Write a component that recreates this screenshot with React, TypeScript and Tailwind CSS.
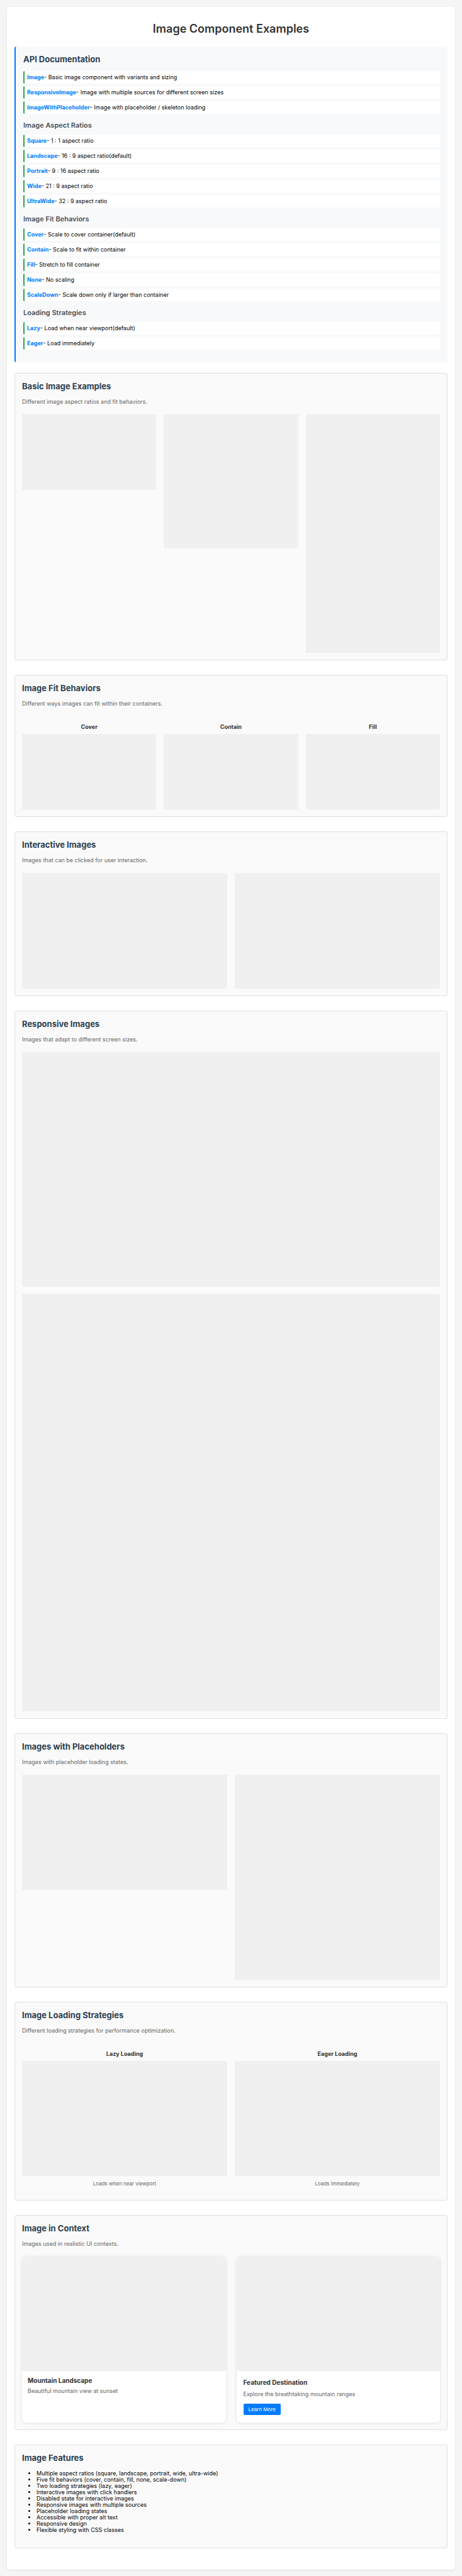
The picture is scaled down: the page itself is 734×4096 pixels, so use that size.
import type { ReactNode } from "react";

type Entry = { name: string; text: string };

const components: Entry[] = [
  { name: "Image", text: "Basic image component with variants and sizing" },
  { name: "ResponsiveImage", text: "Image with multiple sources for different screen sizes" },
  { name: "ImageWithPlaceholder", text: "Image with placeholder / skeleton loading" },
];

const ratios: Entry[] = [
  { name: "Square", text: "1 : 1 aspect ratio" },
  { name: "Landscape", text: "16 : 9 aspect ratio(default)" },
  { name: "Portrait", text: "9 : 16 aspect ratio" },
  { name: "Wide", text: "21 : 9 aspect ratio" },
  { name: "UltraWide", text: "32 : 9 aspect ratio" },
];

const fits: Entry[] = [
  { name: "Cover", text: "Scale to cover container(default)" },
  { name: "Contain", text: "Scale to fit within container" },
  { name: "Fill", text: "Stretch to fill container" },
  { name: "None", text: "No scaling" },
  { name: "ScaleDown", text: "Scale down only if larger than container" },
];

const strategies: Entry[] = [
  { name: "Lazy", text: "Load when near viewport(default)" },
  { name: "Eager", text: "Load immediately" },
];

const features = [
  "Multiple aspect ratios (square, landscape, portrait, wide, ultra-wide)",
  "Five fit behaviors (cover, contain, fill, none, scale-down)",
  "Two loading strategies (lazy, eager)",
  "Interactive images with click handlers",
  "Disabled state for interactive images",
  "Responsive images with multiple sources",
  "Placeholder loading states",
  "Accessible with proper alt text",
  "Responsive design",
  "Flexible styling with CSS classes",
];

const aspects = {
  landscape: "aspect-video",
  square: "aspect-square",
  portrait: "aspect-[9/16]",
};

function Picture({ aspect = "landscape" }: { aspect?: keyof typeof aspects }) {
  return <div className={`w-full bg-[#f0f0f0] ${aspects[aspect]}`} />;
}

function EntryList({ entries }: { entries: Entry[] }) {
  return (
    <ul className="flex flex-col gap-1">
      {entries.map((e) => (
        <li
          key={e.name}
          className="rounded-[2px] border-l-2 border-[#28a745] bg-white p-1 text-[9px] leading-3 text-black"
        >
          <strong className="font-bold text-[#007bff]">{e.name}</strong>- {e.text}
        </li>
      ))}
    </ul>
  );
}

function SubHeading({ children }: { children: ReactNode }) {
  return (
    <h3 className="mt-[11px] mb-2 text-[11px] leading-[14px] font-semibold text-[#495057]">{children}</h3>
  );
}

function Section({ title, intro, children }: { title: string; intro?: string; children: ReactNode }) {
  return (
    <section className="mb-[23px] rounded-[3px] border border-[#e0e0e0] bg-[#fafafa] p-[11px]">
      <h2 className="mb-[10px] text-[13px] leading-[18px] font-bold text-[#2c3e50]">{title}</h2>
      {intro && <p className="mb-[14px] text-[9px] leading-3 text-[#666]">{intro}</p>}
      {children}
    </section>
  );
}

function Labelled({ label, caption }: { label: string; caption?: string }) {
  return (
    <div className="pt-[11px] text-center">
      <h4 className="mb-[5px] text-[9px] leading-3 font-bold text-[#333]">{label}</h4>
      <Picture />
      {caption && <p className="mt-[7px] mb-[10px] text-[8px] leading-[10px] text-[#666]">{caption}</p>}
    </div>
  );
}

export default function App() {
  return (
    <div className="bg-[#f5f5f5] p-[11px] font-['Inter',sans-serif]">
      <main className="rounded-[5px] bg-white px-3 pt-3 pb-[11px] shadow-[0_1px_3px_rgba(0,0,0,0.1)]">
        <h1 className="mt-[11px] mb-4 text-center text-[18px] leading-6 font-semibold text-[#333]">
          Image Component Examples
        </h1>

        <section className="mb-[17px] rounded-[3px] border-l-2 border-[#007bff] bg-[#f8f9fa] px-3 pt-[11px] pb-5">
          <h2 className="mb-[10px] text-[13px] leading-[18px] font-bold text-[#2c3e50]">API Documentation</h2>
          <EntryList entries={components} />
          <SubHeading>Image Aspect Ratios</SubHeading>
          <EntryList entries={ratios} />
          <SubHeading>Image Fit Behaviors</SubHeading>
          <EntryList entries={fits} />
          <SubHeading>Loading Strategies</SubHeading>
          <EntryList entries={strategies} />
        </section>

        <Section title="Basic Image Examples" intro="Different image aspect ratios and fit behaviors.">
          <div className="grid grid-cols-3 items-start gap-3">
            <Picture />
            <Picture aspect="square" />
            <Picture aspect="portrait" />
          </div>
        </Section>

        <Section title="Image Fit Behaviors" intro="Different ways images can fit within their containers.">
          <div className="grid grid-cols-3 gap-3">
            <Labelled label="Cover" />
            <Labelled label="Contain" />
            <Labelled label="Fill" />
          </div>
        </Section>

        <Section title="Interactive Images" intro="Images that can be clicked for user interaction.">
          <div className="grid grid-cols-2 gap-3">
            <Picture />
            <Picture />
          </div>
        </Section>

        <Section title="Responsive Images" intro="Images that adapt to different screen sizes.">
          <div className="flex flex-col gap-[11px]">
            <Picture />
            <Picture aspect="square" />
          </div>
        </Section>

        <Section title="Images with Placeholders" intro="Images with placeholder loading states.">
          <div className="grid grid-cols-2 items-start gap-3">
            <Picture />
            <Picture aspect="square" />
          </div>
        </Section>

        <Section title="Image Loading Strategies" intro="Different loading strategies for performance optimization.">
          <div className="grid grid-cols-2 gap-3">
            <Labelled label="Lazy Loading" caption="Loads when near viewport" />
            <Labelled label="Eager Loading" caption="Loads immediately" />
          </div>
        </Section>

        <Section title="Image in Context" intro="Images used in realistic UI contexts.">
          <div className="grid grid-cols-2 gap-[17px]">
            <article className="overflow-hidden rounded-[5px] bg-white shadow-[0_1px_5px_rgba(0,0,0,0.1)]">
              <Picture />
              <div className="p-[9px]">
                <h3 className="mb-[5px] text-[10px] leading-3 font-bold text-[#333]">Mountain Landscape</h3>
                <p className="text-[9px] leading-3 text-[#666]">Beautiful mountain view at sunset</p>
              </div>
            </article>
            <article className="overflow-hidden rounded-[5px] bg-white shadow-[0_1px_5px_rgba(0,0,0,0.1)]">
              <Picture />
              <div className="px-[11px] py-3">
                <h3 className="mb-[7px] text-[10px] leading-3 font-bold text-[#333]">Featured Destination</h3>
                <p className="mb-[9px] text-[9px] leading-3 text-[#666]">Explore the breathtaking mountain ranges</p>
                <button
                  type="button"
                  className="block rounded-[2px] bg-[#007bff] px-2 py-1 text-[8px] leading-[10px] text-white"
                >
                  Learn More
                </button>
              </div>
            </article>
          </div>
        </Section>

        <Section title="Image Features">
          <ul className="mt-[11px] mb-3 list-disc pl-[23px] text-[9px] leading-[10px] text-black">
            {features.map((f) => (
              <li key={f}>{f}</li>
            ))}
          </ul>
        </Section>
      </main>
    </div>
  );
}
